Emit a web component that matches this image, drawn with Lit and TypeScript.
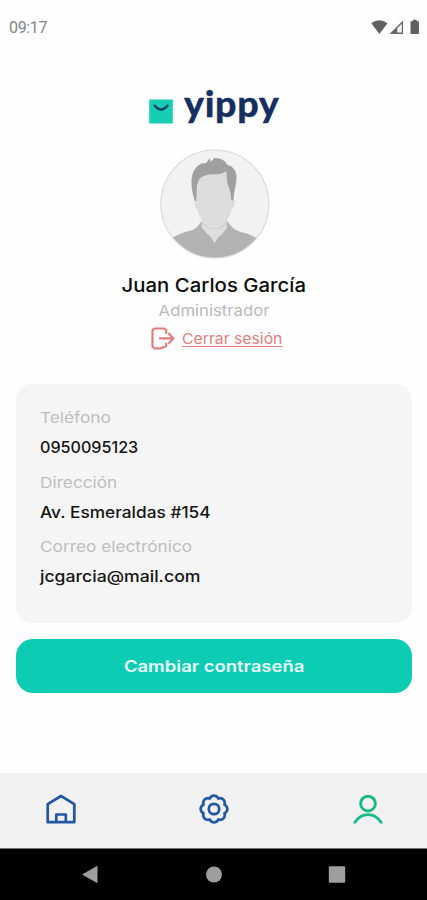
import { LitElement, html, css, svg } from "lit";
import { customElement } from "lit/decorators.js";

const gearPath = (() => {
  const pts: string[] = [];
  for (let i = 0; i <= 128; i++) {
    const a = (i / 128) * Math.PI * 2;
    const r = 11.3 + 2 * Math.pow(Math.abs(Math.cos(a * 4)), 0.8);
    pts.push(`${(15 + r * Math.cos(a)).toFixed(2)} ${(15 + r * Math.sin(a)).toFixed(2)}`);
  }
  return "M" + pts.join("L") + "Z";
})();

@customElement("status-bar")
class StatusBar extends LitElement {
  static styles = css`
    :host { display: flex; justify-content: space-between; height: 56px; box-sizing: border-box; padding: 18px 7px 0 9px; }
    .time { font: 400 16px/20px Roboto, sans-serif; color: #858585; letter-spacing: -0.35px; }
    svg { display: block; width: 50px; height: 18px; }
  `;
  render() {
    return html`<span class="time">09:17</span>
      <svg viewBox="370 18 50 18" fill="#606060">
        <path d="M371.3 23.3Q379.3 17.3 387.5 23.3L379.4 34Z" />
        <path d="M389.6 34L403 20.5V34Z" fill="#666" />
        <path d="M397.2 28.2L401.8 23.8V32.6H397.2Z" fill="#f4f4f4" />
        <path d="M410.5 21.2h2.2v-1.5h4v1.5h2.2v12.9H410.5Z" />
      </svg>`;
  }
}

@customElement("profile-header")
class ProfileHeader extends LitElement {
  static styles = css`
    :host { display: flex; flex-direction: column; align-items: center; height: 328px; font-family: Inter, sans-serif; }
    .logo { display: flex; width: 131px; height: 44px; margin: 25px 0 0 1px; gap: 10px; }
    .bag { width: 25px; height: 26px; margin-top: 17px; flex: none; }
    .word { font: 900 36px/44px Lato, sans-serif; color: #152f62; letter-spacing: 0.6px; transform: scaleX(1.045); transform-origin: left; -webkit-text-stroke: 0.3px #152f62; }
    .avatar { width: 110px; height: 110px; margin: 24px 0 0 2px; display: block; }
    .name { font-weight: 500; font-size: 18.5px; line-height: 26px; margin-top: 13px; color: #0c0c0c; white-space: nowrap; transform: scaleX(1.1); }
    .role { font-size: 14.8px; line-height: 22px; margin: 1.5px 0 0 1px; color: #b9b9b9; transform: scaleX(1.13); }
    .logout { display: flex; align-items: center; gap: 7.5px; height: 26px; margin-top: 3.5px; color: #e27d7c; }
    .logout svg { width: 24px; height: 23px; }
    .logout span { font-size: 14.8px; line-height: 24px; margin-top: 2px; text-decoration: underline; text-decoration-thickness: 1px; text-underline-offset: 2px; white-space: nowrap; transform: scaleX(1.065); transform-origin: left; }
  `;
  render() {
    return html`
      <div class="logo">
        <svg class="bag" viewBox="0 0 25 26">
          <path d="M.2 1.5H23.8V25.5H.2Z" fill="#17cdb4" />
          <path d="M5.4 7.6Q12 15.7 18.6 7.6" fill="none" stroke="#123f66" stroke-width="2.3" stroke-linecap="round" />
        </svg>
        <span class="word">yippy</span>
      </div>
      <svg class="avatar" viewBox="28.5 28 330 330">
        <defs><clipPath id="round"><circle cx="193" cy="193" r="162" /></clipPath></defs>
        <circle cx="193" cy="193" r="162" fill="#f2f2f2" />
        <g clip-path="url(#round)">
          <path d="M60 298Q88 280 124 272Q144 262 151 246H232Q246 270 269 276Q298 281 326 300V370H60Z" fill="#b2b2b2" />
          <path d="M153 240V262Q167 280 181 292L192 311L202 295Q218 282 229 266V240Z" fill="#dedede" />
          <path d="M154 244Q190 290 229 244V250Q217 268 194 269Q170 270 154 250Z" fill="#cfcfcf" />
          <path d="M134 180Q129 181 133 196Q136 208 141 211Q147 237 164 249Q192 268 220 249Q238 234 243 211Q252 201 254 181L246 178L236 95H150Z" fill="#dcdcdc" />
          <path d="M132 183Q117 131 126 103Q132 83 151 72Q155 70 166 71L178 56L181 67L191 55Q220 54 231 76Q252 80 257 103Q260 119 253 148L248 183L242 180Q241 151 231 134Q227 110 229 95Q212 105 190 104Q154 104 145 121Q139 133 139 151L137 183Z" fill="#a0a0a0" />
        </g>
        <circle cx="193" cy="193" r="162" fill="none" stroke="#d9d9d9" stroke-width="3.5" />
      </svg>
      <div class="name">Juan Carlos García</div>
      <div class="role">Administrador</div>
      <div class="logout">
        <svg viewBox="0 0 24 23" fill="none" stroke="currentColor" stroke-width="2.2" stroke-linejoin="round" stroke-linecap="round">
          <path d="M15.2 6V3.2L13.4 1.5H3.2L1.5 3.2V19.6L3.4 21.3H10.2L15.2 19V16.5" />
          <path d="M9 11.4H22M18 6.7L22.4 11.4L18 16" />
        </svg>
        <span>Cerrar sesión</span>
      </div>`;
  }
}

@customElement("contact-card")
class ContactCard extends LitElement {
  static styles = css`
    :host { display: block; box-sizing: border-box; height: 239px; margin: 0 15px 0 16px; padding: 23px 24px; border-radius: 16px; background: #f5f5f5; font-family: Inter, sans-serif; }
    .field { height: 64.5px; white-space: nowrap; }
    .label, .value { width: max-content; line-height: 22px; transform-origin: left; }
    .label { font-size: 15px; color: #bdbdbd; transform: scaleX(1.15); margin-left: -0.5px; }
    .value { font-size: 15.5px; margin-top: 8px; font-weight: 500; color: #141414; }
    .v-tel { transform: scaleX(1.04); }
    .v-dir { transform: scaleX(1.115); }
    .v-cor { transform: scaleX(1.138); }
  `;
  private fields = [
    ["tel", "Teléfono", "0950095123"],
    ["dir", "Dirección", "Av. Esmeraldas #154"],
    ["cor", "Correo electrónico", "jcgarcia@mail.com"],
  ];
  render() {
    return this.fields.map(
      ([k, label, value]) => html`<div class="field">
        <div class="label">${label}</div>
        <div class="value v-${k}">${value}</div>
      </div>`
    );
  }
}

@customElement("tab-bar")
class TabBar extends LitElement {
  static styles = css`
    :host { display: block; height: 127px; }
    .tabs { display: flex; justify-content: space-between; box-sizing: border-box; height: 75px; padding: 20.5px 44.5px 0 46px; background: #f1f1f1; }
    .tabs svg { width: 30px; height: 30px; }
    .tabs .gear { margin-right: 1px; }
    .system { height: 51px; background: #000; border-top: 1px solid #777; }
    .system svg { display: block; width: 427px; height: 51px; }
  `;
  render() {
    return html`
      <div class="tabs">
        <svg viewBox="0 0 30 30" fill="none" stroke="#2257a4" stroke-width="2.7" stroke-linejoin="round">
          <path d="M1.7 10.1L15 2L28.3 10.1V28.2H1.7ZM10.3 28V20.5H19.8V28" />
        </svg>
        <svg class="gear" viewBox="0 0 30 30" fill="none" stroke="#2257a4" stroke-width="2.7" stroke-linejoin="round">
          ${svg`<path d=${gearPath} />`}
          <circle cx="15" cy="15" r="5.2" />
        </svg>
        <svg viewBox="0 0 30 30" fill="none" stroke="#1bb888" stroke-width="2.9" stroke-linecap="round">
          <circle cx="15" cy="9.6" r="7.4" />
          <path d="M2 28.2Q7 20.6 15 20.6T28 28.2" />
        </svg>
      </div>
      <div class="system">
        <svg viewBox="0 849 427 51" fill="#9e9e9e">
          <path d="M82 874.4L97.5 865.8V883.2Z" />
          <circle cx="214" cy="874.5" r="8" />
          <rect x="328.8" y="866.3" width="16.4" height="16.4" rx="1" />
        </svg>
      </div>`;
  }
}

@customElement("app-root")
class AppRoot extends LitElement {
  static styles = css`
    :host { display: flex; flex-direction: column; width: 427px; height: 900px; background: #fefefe; overflow: hidden; }
    .action { height: 54px; flex: none; margin: 16px 15px 0 16px; border: 0; border-radius: 17px; background: #0dccb4; color: #e9fffb; font: 600 16px/54px Inter, sans-serif; padding: 0; }
    .action span { display: inline-block; transform: scaleX(1.155); }
    .fill { flex: 1; }
  `;
  render() {
    return html`<status-bar></status-bar>
      <profile-header></profile-header>
      <contact-card></contact-card>
      <button class="action"><span>Cambiar contraseña</span></button>
      <div class="fill"></div>
      <tab-bar></tab-bar>`;
  }
}
